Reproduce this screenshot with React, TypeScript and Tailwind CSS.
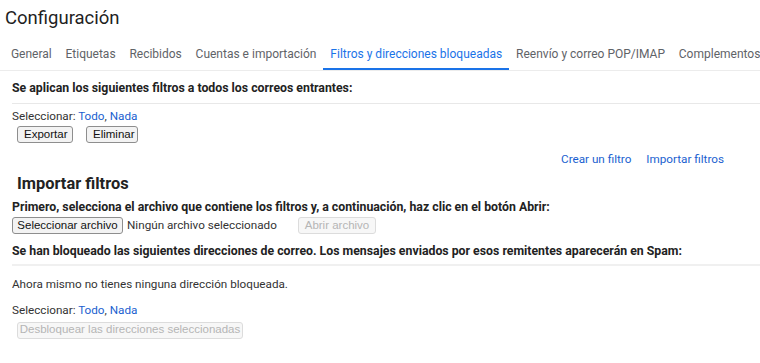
export default function App() {
  const btn =
    "h-[17px] px-[6px] border border-[#8e8e8e] rounded-[3px] bg-[#f3f3f3] text-[11.5px] leading-none text-[#111] font-['Liberation_Sans',Arial,sans-serif]";
  const btnOff =
    "h-[17px] px-[6px] border border-[#dcdcdc] rounded-[3px] bg-[#f7f7f7] text-[11.5px] leading-none text-[#b5b5b5] font-['Liberation_Sans',Arial,sans-serif]";

  const tabs = [
    "General",
    "Etiquetas",
    "Recibidos",
    "Cuentas e importación",
    "Filtros y direcciones bloqueadas",
    "Reenvío y correo POP/IMAP",
    "Complementos",
  ];

  return (
    <div className="w-[760px] h-[363px] overflow-hidden bg-white font-['Roboto',Arial,sans-serif] text-[#222]">
      <div className="h-[36px] pl-[5px] pt-[6px] text-[18.5px] leading-[24px] text-[#1f1f1f]">
        Configuración
      </div>

      {/* tabs */}
      <div className="flex h-[35px] pl-[4px] border-b border-[#ececec] whitespace-nowrap">
        {tabs.map((t) => (
          <div
            key={t}
            className={
              t === "Filtros y direcciones bloqueadas"
                ? "px-[7px] pt-[9px] text-[12px] text-[#1a73e8] border-b-[2px] border-[#1a73e8]"
                : "px-[6.9px] pt-[9px] text-[12px] text-[#5f6368]"
            }
          >
            {t}
          </div>
        ))}
      </div>

      <div className="pl-[12px]">
        <div className="h-[32px] pt-[10px] text-[12.3px] font-bold leading-[14px] text-[#222] whitespace-nowrap">
          Se aplican los siguientes filtros a todos los correos entrantes:
        </div>
        <div className="border-t border-[#e8e8e8]" />
        <div className="pt-[5px] text-[11.7px] leading-[14px] text-[#333]">
          Seleccionar: <span className="text-[#1a5fd0]">Todo</span>,{" "}
          <span className="text-[#1a5fd0]">Nada</span>
        </div>
        <div className="flex gap-[13px] pl-[5px] pt-[3px]">
          <button className={btn + " w-[56px]"}>Exportar</button>
          <button className={btn + " w-[52px]"}>Eliminar</button>
        </div>

        <div className="flex justify-end gap-[15px] pr-[36px] pt-[9px] text-[11.7px] leading-[14px] text-[#1a5fd0]">
          <span>Crear un filtro</span>
          <span>Importar filtros</span>
        </div>

        <div className="pl-[5px] pt-[9px] text-[16.4px] font-bold leading-[18px] text-[#222]">
          Importar filtros
        </div>
        <div className="pt-[7px] text-[12.3px] font-bold leading-[14px] text-[#222] whitespace-nowrap">
          Primero, selecciona el archivo que contiene los filtros y, a continuación, haz clic en el botón Abrir:
        </div>
        <div className="flex items-center pt-[3px] text-[11.7px] text-[#333]">
          <button className={btn + " w-[111px] !px-0"}>Seleccionar archivo</button>
          <span className="ml-[4px] w-[171px]">Ningún archivo seleccionado</span>
          <button className={btnOff + " w-[78px] !px-0"}>Abrir archivo</button>
        </div>
        <div className="pt-[9px] h-[29px] text-[12.3px] font-bold leading-[14px] text-[#222] whitespace-nowrap">
          Se han bloqueado las siguientes direcciones de correo. Los mensajes enviados por esos remitentes aparecerán en Spam:
        </div>
        <div className="border-t-[2px] border-[#f0f0f0]" />
        <div className="pt-[11px] text-[11.7px] leading-[14px] text-[#333]">
          Ahora mismo no tienes ninguna dirección bloqueada.
        </div>
        <div className="pt-[12px] text-[11.7px] leading-[14px] text-[#333]">
          Seleccionar: <span className="text-[#1a5fd0]">Todo</span>,{" "}
          <span className="text-[#1a5fd0]">Nada</span>
        </div>
        <div className="flex pl-[5px] pt-[5px]">
          <button className={btnOff + " w-[226px] !px-0"}>Desbloquear las direcciones seleccionadas</button>
        </div>
      </div>
    </div>
  );
}
